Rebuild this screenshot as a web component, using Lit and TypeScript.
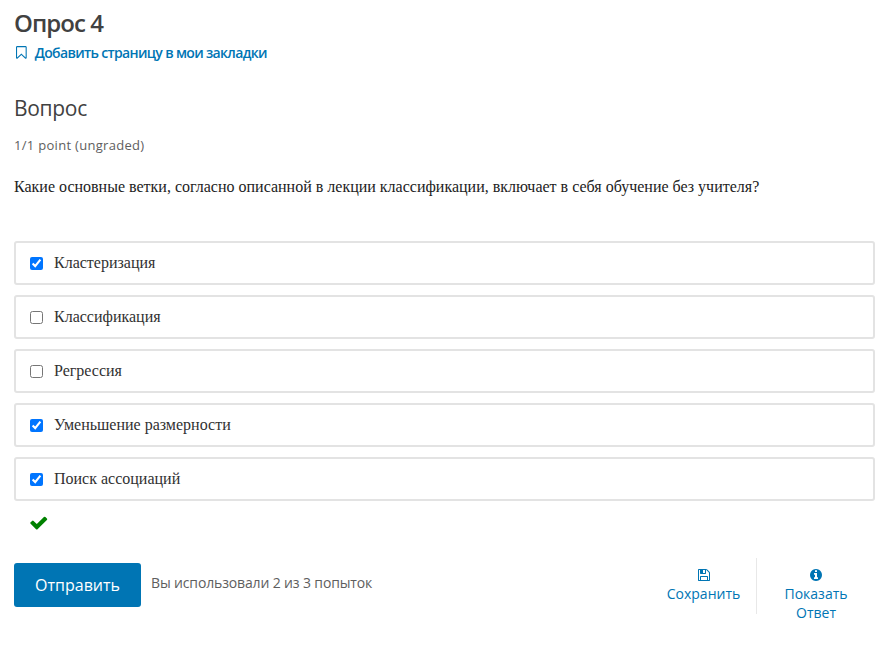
import { LitElement, html, css, svg } from "lit";
import { customElement, property, state } from "lit/decorators.js";

const ICONS: Record<string, { w: number; d: string }> = {
  bookmark: {
    w: 1280,
    d: "M1152 256h-1024v1242l423-406 89-85 89 85 423 406v-1242zm12-128q23 0 44 9 33 13 52.500 41t19.500 62v1289q0 34-19.500 62t-52.500 41q-19 8-44 8-48 0-83-32l-441-424-441 424q-36 33-83 33-23 0-44-9-33-13-52.500-41t-19.500-62v-1289q0-34 19.500-62t52.500-41q21-9 44-9h1048z",
  },
  save: {
    w: 1792,
    d: "M512 1536h768v-384h-768v384zm896 0h128v-896q0-14-10-38.500t-20-34.500l-281-281q-10-10-34-20t-39-10v416q0 40-28 68t-68 28h-576q-40 0-68-28t-28-68v-416h-128v1280h128v-416q0-40 28-68t68-28h832q40 0 68 28t28 68v416zm-384-928v-320q0-13-9.500-22.500t-22.500-9.500h-192q-13 0-22.500 9.500t-9.500 22.500v320q0 13 9.500 22.500t22.500 9.500h192q13 0 22.500-9.500t9.500-22.500zm640 32v928q0 40-28 68t-68 28h-1344q-40 0-68-28t-28-68v-1344q0-40 28-68t68-28h928q40 0 88 20t76 48l280 280q28 28 48 76t20 88z",
  },
  info: {
    w: 1792,
    d: "M1152 1376v-160q0-14-9-23t-23-9h-96v-512q0-14-9-23t-23-9h-320q-14 0-23 9t-9 23v160q0 14 9 23t23 9h96v320h-96q-14 0-23 9t-9 23v160q0 14 9 23t23 9h448q14 0 23-9t9-23zm-128-896v-160q0-14-9-23t-23-9h-192q-14 0-23 9t-9 23v160q0 14 9 23t23 9h192q14 0 23-9t9-23zm640 416q0 209-103 385.500t-279.500 279.500-385.500 103-385.500-103-279.500-279.500-103-385.500 103-385.500 279.500-279.500 385.500-103 385.500 103 279.500 279.500 103 385.500z",
  },
  check: {
    w: 1792,
    d: "M1671 566q0 40-28 68l-724 724-136 136q-28 28-68 28t-68-28l-136-136-362-362q-28-28-28-68t28-68l136-136q28-28 68-28t68 28l294 295 656-657q28-28 68-28t68 28l136 136q28 28 28 68z",
  },
};

@customElement("ui-icon")
export class UiIcon extends LitElement {
  @property() name = "check";
  static styles = css`
    :host { display: block; height: 14px; }
    svg { display: block; height: 100%; fill: currentColor; }
  `;
  render() {
    const icon = ICONS[this.name];
    return html`<svg viewBox="0 0 ${icon.w} 1792" aria-hidden="true">${svg`<path d=${icon.d}></path>`}</svg>`;
  }
}

@customElement("app-root")
export class AppRoot extends LitElement {
  @state() private choices = [
    { label: "Кластеризация", checked: true },
    { label: "Классификация", checked: false },
    { label: "Регрессия", checked: false },
    { label: "Уменьшение размерности", checked: true },
    { label: "Поиск ассоциаций", checked: true },
  ];

  static styles = css`
    :host {
      display: block;
      box-sizing: border-box;
      height: 651px;
      padding: 8px 18px 0 14px;
      background: #fff;
      color: #414141;
      font-family: "Open Sans", "Noto Sans", sans-serif;
    }
    h2, h3, p { margin: 0; font-weight: 400; white-space: nowrap; }
    .title { height: 30px; font-size: 24px; line-height: 30px; font-weight: 600; letter-spacing: -0.95px; }
    .bookmark {
      display: flex; align-items: center; gap: 8px; height: 28px; width: max-content;
      padding-left: 2px; box-sizing: border-box; color: #0075b4; text-decoration: none;
      font-size: 14px; font-weight: 600; letter-spacing: -0.66px;
    }
    .bookmark ui-icon { height: 15px; }
    .subtitle { margin-top: 27px; height: 30px; font-size: 21px; line-height: 30px; letter-spacing: -0.3px; }
    .progress { margin-top: 12px; height: 20px; font-size: 13px; line-height: 20px; letter-spacing: 0.3px; color: #5e5e5e; }
    .question {
      margin-top: 20px; height: 24px; line-height: 24px; font-size: 16px; color: #222;
      font-family: "Liberation Serif", serif;
    }
    .choices { display: grid; gap: 10px; margin-top: 42px; }
    .choice {
      display: flex; align-items: center; height: 44px; box-sizing: border-box;
      border: 2px solid #e3e3e3; border-radius: 3px; padding-left: 14px;
      font: 16px/24px "Liberation Serif", serif; color: #313131;
    }
    .choice input { width: 13px; height: 13px; margin: 1px 11px 0 0; }
    .status { margin: 12px 0 0 15px; color: #008100; width: 20px; height: 20px; }
    .status ui-icon { height: 19.5px; }
    .actions { display: flex; align-items: flex-start; margin-top: 25px; }
    .submit {
      width: 127px; height: 44px; margin-top: 5px; border: 0; border-radius: 3px; padding: 0;
      background: #0075b4; color: #fff; font: 16px/24px "Open Sans", sans-serif;
    }
    .attempts { margin: 15px 0 0 10px; font-size: 14px; line-height: 20px; letter-spacing: -0.14px; color: #5e5e5e; }
    .tools { display: flex; margin-left: auto; }
    .tool {
      display: flex; flex-direction: column; align-items: center; box-sizing: border-box;
      padding: 10px 0 0; border: 0; background: none; color: #0075b4;
      font: 14px/19px "Open Sans", sans-serif;
    }
    .save { width: 106px; height: 56px; border-right: 1px solid #e8e8e8; }
    .answer { width: 118px; }
    .tool span { margin-top: 2px; width: 80px; text-align: center; }
  `;

  private toggle(index: number) {
    this.choices = this.choices.map((c, i) => (i === index ? { ...c, checked: !c.checked } : c));
  }

  render() {
    return html`
      <h2 class="title">Опрос 4</h2>
      <a class="bookmark"><ui-icon name="bookmark"></ui-icon><span>Добавить страницу в мои закладки</span></a>
      <h3 class="subtitle">Вопрос</h3>
      <p class="progress">1/1 point (ungraded)</p>
      <p class="question">Какие основные ветки, согласно описанной в лекции классификации, включает в себя обучение без учителя?</p>
      <div class="choices">
        ${this.choices.map(
          (c, i) => html`<label class="choice">
            <input type="checkbox" .checked=${c.checked} @change=${() => this.toggle(i)} /><span>${c.label}</span>
          </label>`
        )}
      </div>
      <div class="status"><ui-icon name="check"></ui-icon></div>
      <div class="actions">
        <button class="submit">Отправить</button>
        <p class="attempts">Вы использовали 2 из 3 попыток</p>
        <div class="tools">
          <button class="tool save"><ui-icon name="save"></ui-icon><span>Сохранить</span></button>
          <button class="tool answer"><ui-icon name="info"></ui-icon><span>Показать Ответ</span></button>
        </div>
      </div>
    `;
  }
}
